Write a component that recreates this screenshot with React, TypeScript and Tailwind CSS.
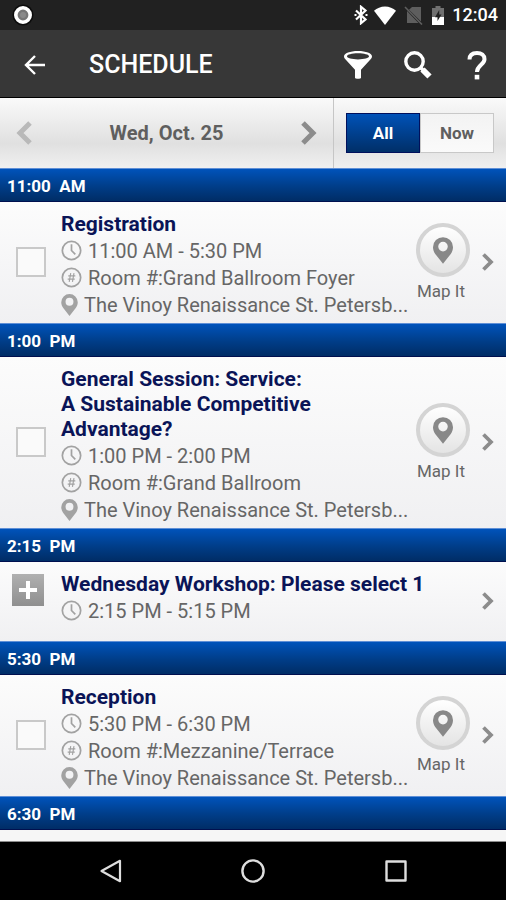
import * as React from "react";
import clsx from "clsx";

type Session = {
  time: string;
  title: string;
  hours: string;
  room?: string;
  venue?: string;
};

const VENUE = "The Vinoy Renaissance St. Petersb...";

const SESSIONS: Session[] = [
  { time: "11:00 AM", title: "Registration", hours: "11:00 AM - 5:30 PM", room: "Room #:Grand Ballroom Foyer", venue: VENUE },
  { time: "1:00 PM", title: "General Session: Service:\nA Sustainable Competitive Advantage?", hours: "1:00 PM - 2:00 PM", room: "Room #:Grand Ballroom", venue: VENUE },
  { time: "2:15 PM", title: "Wednesday Workshop: Please select 1", hours: "2:15 PM - 5:15 PM" },
  { time: "5:30 PM", title: "Reception", hours: "5:30 PM - 6:30 PM", room: "Room #:Mezzanine/Terrace", venue: VENUE },
];

function Chevron({ className, flip }: { className?: string; flip?: boolean }) {
  return (
    <svg viewBox="0 0 16 24" className={className} fill="none" stroke="currentColor" strokeWidth="5">
      <path d={flip ? "M14 2 4 12l10 10" : "M2 2l10 10L2 22"} />
    </svg>
  );
}

function ClockIcon() {
  return (
    <svg viewBox="0 0 22 22" className="size-[21px] shrink-0 text-[#a2a2a2]" fill="none" stroke="currentColor" strokeWidth="1.8">
      <circle cx="11" cy="11" r="9.6" />
      <path d="M11 4.5V11l4 4" />
    </svg>
  );
}

function RoomIcon() {
  return (
    <svg viewBox="0 0 22 22" className="size-[21px] shrink-0 text-[#a2a2a2]" fill="none" stroke="currentColor" strokeWidth="1.8">
      <circle cx="11" cy="11" r="9.6" />
      <path strokeWidth="1.2" d="M10.2 6.5 8.6 15.5M13.6 6.5 12 15.5M7.6 9.3h7.4M7 12.7h7.4" />
    </svg>
  );
}

function PinIcon({ className }: { className?: string }) {
  return (
    <svg viewBox="0 0 18 24" className={className} fill="currentColor">
      <path fillRule="evenodd" d="M9 0a9 9 0 0 0-9 9c0 2.2.8 4.2 2 6.1L9 24l7-8.9c1.2-1.9 2-3.9 2-6.1a9 9 0 0 0-9-9Zm0 4.2a4.3 4.3 0 1 1 0 8.6 4.3 4.3 0 0 1 0-8.6Z" />
    </svg>
  );
}

function StatusBar() {
  return (
    <div className="flex h-[30px] items-center bg-[#212121] pr-2 pl-3">
      <svg viewBox="0 0 22 22" className="size-[22px]">
        <circle cx="11" cy="11" r="10.5" fill="#0c0c0c" />
        <circle cx="11" cy="11" r="7.2" fill="#777" stroke="#fff" strokeWidth="3.6" />
        <circle cx="11" cy="11" r="3" fill="#8a8a8a" />
      </svg>
      <div className="ml-auto flex items-center">
        <svg viewBox="0 0 14 20" className="mr-[6px] h-5 w-[14px]" fill="none" stroke="#fff" strokeWidth="2.2">
          <path d="m2 5.5 9.5 9L7 18.2V1.8l4.5 3.7-9.5 9" />
          <path d="M.5 10h2M11.5 10h2" />
        </svg>
        <svg viewBox="0 0 22 19" className="mr-2 h-[19px] w-[22px]" fill="#fff">
          <path d="M11 19 0 4.8C3 2.2 6.8.5 11 .5s8 1.7 11 4.3Z" />
        </svg>
        <svg viewBox="0 0 20 20" className="mr-2 size-5">
          <path fill="#5e5e5e" d="M8 2h9v14.5L5 4.8ZM3 6l11.5 12H3Z" />
          <path stroke="#5e5e5e" strokeWidth="1.6" d="m1 2 17 17.5" />
        </svg>
        <svg viewBox="0 0 12 19" className="mr-2 h-[19px] w-3">
          <path fill="#707070" d="M3.5 0h5v2H12v9H0V2h3.5Z" />
          <path fill="#fff" d="M0 11h12v8H0Z" />
          <path fill="#212121" d="M7.2 4 3 11.3h2.500V15l4-6.500H7.200Z" />
        </svg>
        <span className="text-[18px] leading-none font-medium text-white">12:04</span>
      </div>
    </div>
  );
}

function AppBar() {
  return (
    <header className="flex h-[68px] items-center border-b border-black bg-[#373737] pt-[2px] text-white">
      <button type="button" aria-label="Back" className="ml-6">
        <svg viewBox="0 0 22 20" className="h-5 w-[22px]" fill="none" stroke="currentColor" strokeWidth="2.4">
          <path d="M21 10H2.5M11 1 2 10l9 9" />
        </svg>
      </button>
      <h1 className="ml-[43px] text-[25px] leading-[30px] font-medium">SCHEDULE</h1>
      <div className="ml-auto flex items-center pr-[19px]">
        <button type="button" aria-label="Filter">
          <svg viewBox="0 0 30 30" className="size-[30px]" fill="currentColor">
            <path fillRule="evenodd" d="M15 1C7 1 1 3.3 1 6.5c0 1.2.6 2 1.6 3L12 19.8V28c0 1 6 1 6 0v-8.2l9.4-10.300c1-1 1.600-1.800 1.600-3C29 3.300 23 1 15 1Zm0 2.200c6.200 0 11 1.300 11 3.100s-4.800 3.100-11 3.100S4 8.100 4 6.300s4.800-3.100 11-3.100Z" />
          </svg>
        </button>
        <button type="button" aria-label="Search" className="ml-[30px]">
          <svg viewBox="0 0 30 30" className="size-[30px]" fill="none" stroke="currentColor">
            <circle cx="11.5" cy="11.5" r="8.7" strokeWidth="3.4" />
            <path strokeWidth="3.5" d="m17 17 4 4" />
            <path strokeWidth="6" d="m19.5 19.5 7 7" />
          </svg>
        </button>
        <button type="button" aria-label="Help" className="ml-[34px]">
          <svg viewBox="0 0 20 30" className="h-[30px] w-5" fill="none" stroke="currentColor" strokeWidth="4">
            <path d="M2.5 9.5C2.5 5 5.5 3 10 3s7.500 2.300 7.500 6.200c0 5.300-7.500 6-7.500 12.800" />
            <path strokeWidth="4.6" d="M10 24.8v4.6" />
          </svg>
        </button>
      </div>
    </header>
  );
}

function DateBar() {
  const [filter, setFilter] = React.useState("All");

  return (
    <div className="flex h-[70px] items-stretch bg-linear-to-b from-[#fafafa] via-[#e0e0e0] via-65% to-[#f0f0f0]">
      <div className="flex flex-1 items-center justify-between border-r border-[#c6c6c6] px-4">
        <button type="button" aria-label="Previous day" className="text-[#b9b9b9]">
          <Chevron flip className="h-6 w-4" />
        </button>
        <span className="text-xl font-bold text-[#5f5f5f]">Wed, Oct. 25</span>
        <button type="button" aria-label="Next day" className="text-[#8c8c8c]">
          <Chevron className="h-6 w-4" />
        </button>
      </div>
      <div className="flex items-center px-3">
        {["All", "Now"].map((name) => (
          <button
            key={name}
            type="button"
            aria-pressed={filter === name}
            onClick={() => setFilter(name)}
            className={clsx(
              "h-10 w-[74px] border pt-[2px] text-[17px] font-bold",
              filter === name
                ? "border-[#00105c] bg-linear-to-b from-[#0052b8] to-[#002f68] text-white"
                : "border-[#c8c8c8] bg-linear-to-b from-[#f3f3f3] to-[#fafafa] text-[#5f5f5f]",
            )}
          >
            {name}
          </button>
        ))}
      </div>
    </div>
  );
}

function TimeHeader({ time }: { time: string }) {
  return (
    <h2 className="h-[34px] border-t border-b border-t-[#5f8fd6] border-b-[#00104f] bg-linear-to-b from-[#0053bb] via-[#003d88] via-55% to-[#002d66] px-[7px] text-[17px] leading-[34px] font-bold text-white">
      {time.replace(" ", "\u00a0 ")}
    </h2>
  );
}

function SessionRow({ session }: { session: Session }) {
  const { title, hours, room, venue } = session;

  return (
    <div className="flex min-h-[79px] items-center bg-linear-to-b from-[#fcfcfc] to-[#f0f0f2] pb-[2px]">
      {venue ? (
        <div className="flex w-[61px] shrink-0 pl-4">
          <input
            type="checkbox"
            aria-label={title}
            className="size-[30px] appearance-none border-2 border-[#c9c9c9] bg-[#fafafa] checked:bg-[#003d88]"
          />
        </div>
      ) : (
        <div className="flex w-[61px] shrink-0 self-start pt-3 pl-3">
          <button type="button" aria-label="Expand" className="flex size-8 items-center justify-center bg-linear-to-b from-[#b0b0b0] to-[#8f8f8f]">
            <svg viewBox="0 0 18 18" className="size-[18px]" stroke="#fff" strokeWidth="4">
              <path d="M9 0v18M0 9h18" />
            </svg>
          </button>
        </div>
      )}

      <div className="min-w-0 flex-1 self-start pt-[10px] pb-[3px] text-[#666]">
        <h3 className="text-[21px] leading-[25px] font-bold whitespace-pre-line text-[#0a1457]">{title}</h3>
        <p className="flex h-[27px] items-center gap-[6px] text-xl whitespace-nowrap">
          <ClockIcon />
          {hours}
        </p>
        {room && (
          <p className="flex h-[27px] items-center gap-[6px] text-xl whitespace-nowrap">
            <RoomIcon />
            {room}
          </p>
        )}
        {venue && (
          <p className="flex h-[27px] items-center gap-[6px] text-xl whitespace-nowrap">
            <PinIcon className="h-[22px] w-[17px] shrink-0 text-[#a2a2a2]" />
            {venue}
          </p>
        )}
      </div>

      {venue && (
        <button type="button" className="flex w-[54px] shrink-0 flex-col items-center gap-[2px] pt-1">
          <span className="flex size-[54px] items-center justify-center rounded-full border-4 border-[#d4d4d4] bg-linear-to-b from-white to-[#e4e4e4]">
            <PinIcon className="h-[27px] w-5 text-[#888]" />
          </span>
          <span className="pr-1 text-[17px] leading-[25px] whitespace-nowrap text-[#666]">Map It</span>
        </button>
      )}
      <a href="#session" aria-label={"Open " + title} className="ml-3 pr-3 text-[#8c8c8c]">
        <Chevron className="h-[18px] w-3" />
      </a>
    </div>
  );
}

function NavBar() {
  return (
    <nav className="flex h-[58px] items-center justify-between bg-black px-[98px] text-[#dedede]">
      <button type="button" aria-label="Back">
        <svg viewBox="0 0 24 24" className="size-6" fill="none" stroke="currentColor" strokeWidth="2.2" strokeLinejoin="round">
          <path d="M22 1.8v20.400L3.500 12Z" />
        </svg>
      </button>
      <button type="button" aria-label="Home">
        <svg viewBox="0 0 24 24" className="size-6" fill="none" stroke="currentColor" strokeWidth="2.4">
          <circle cx="12" cy="12" r="10.6" />
        </svg>
      </button>
      <button type="button" aria-label="Recent apps">
        <svg viewBox="0 0 24 24" className="size-6" fill="none" stroke="currentColor" strokeWidth="2.4" strokeLinejoin="round">
          <path d="M2.5 2.5H21.5V21.5H2.5Z" />
        </svg>
      </button>
    </nav>
  );
}

export default function App() {
  return (
    <div className="flex min-h-screen flex-col bg-[#f6f6f6] font-[Roboto,sans-serif]">
      <StatusBar />
      <AppBar />
      <DateBar />
      <main className="flex-1 border-b border-[#8c8c8c]">
        {SESSIONS.map((session) => (
          <section key={session.time}>
            <TimeHeader time={session.time} />
            <SessionRow session={session} />
          </section>
        ))}
        <TimeHeader time="6:30 PM" />
      </main>
      <NavBar />
    </div>
  );
}
